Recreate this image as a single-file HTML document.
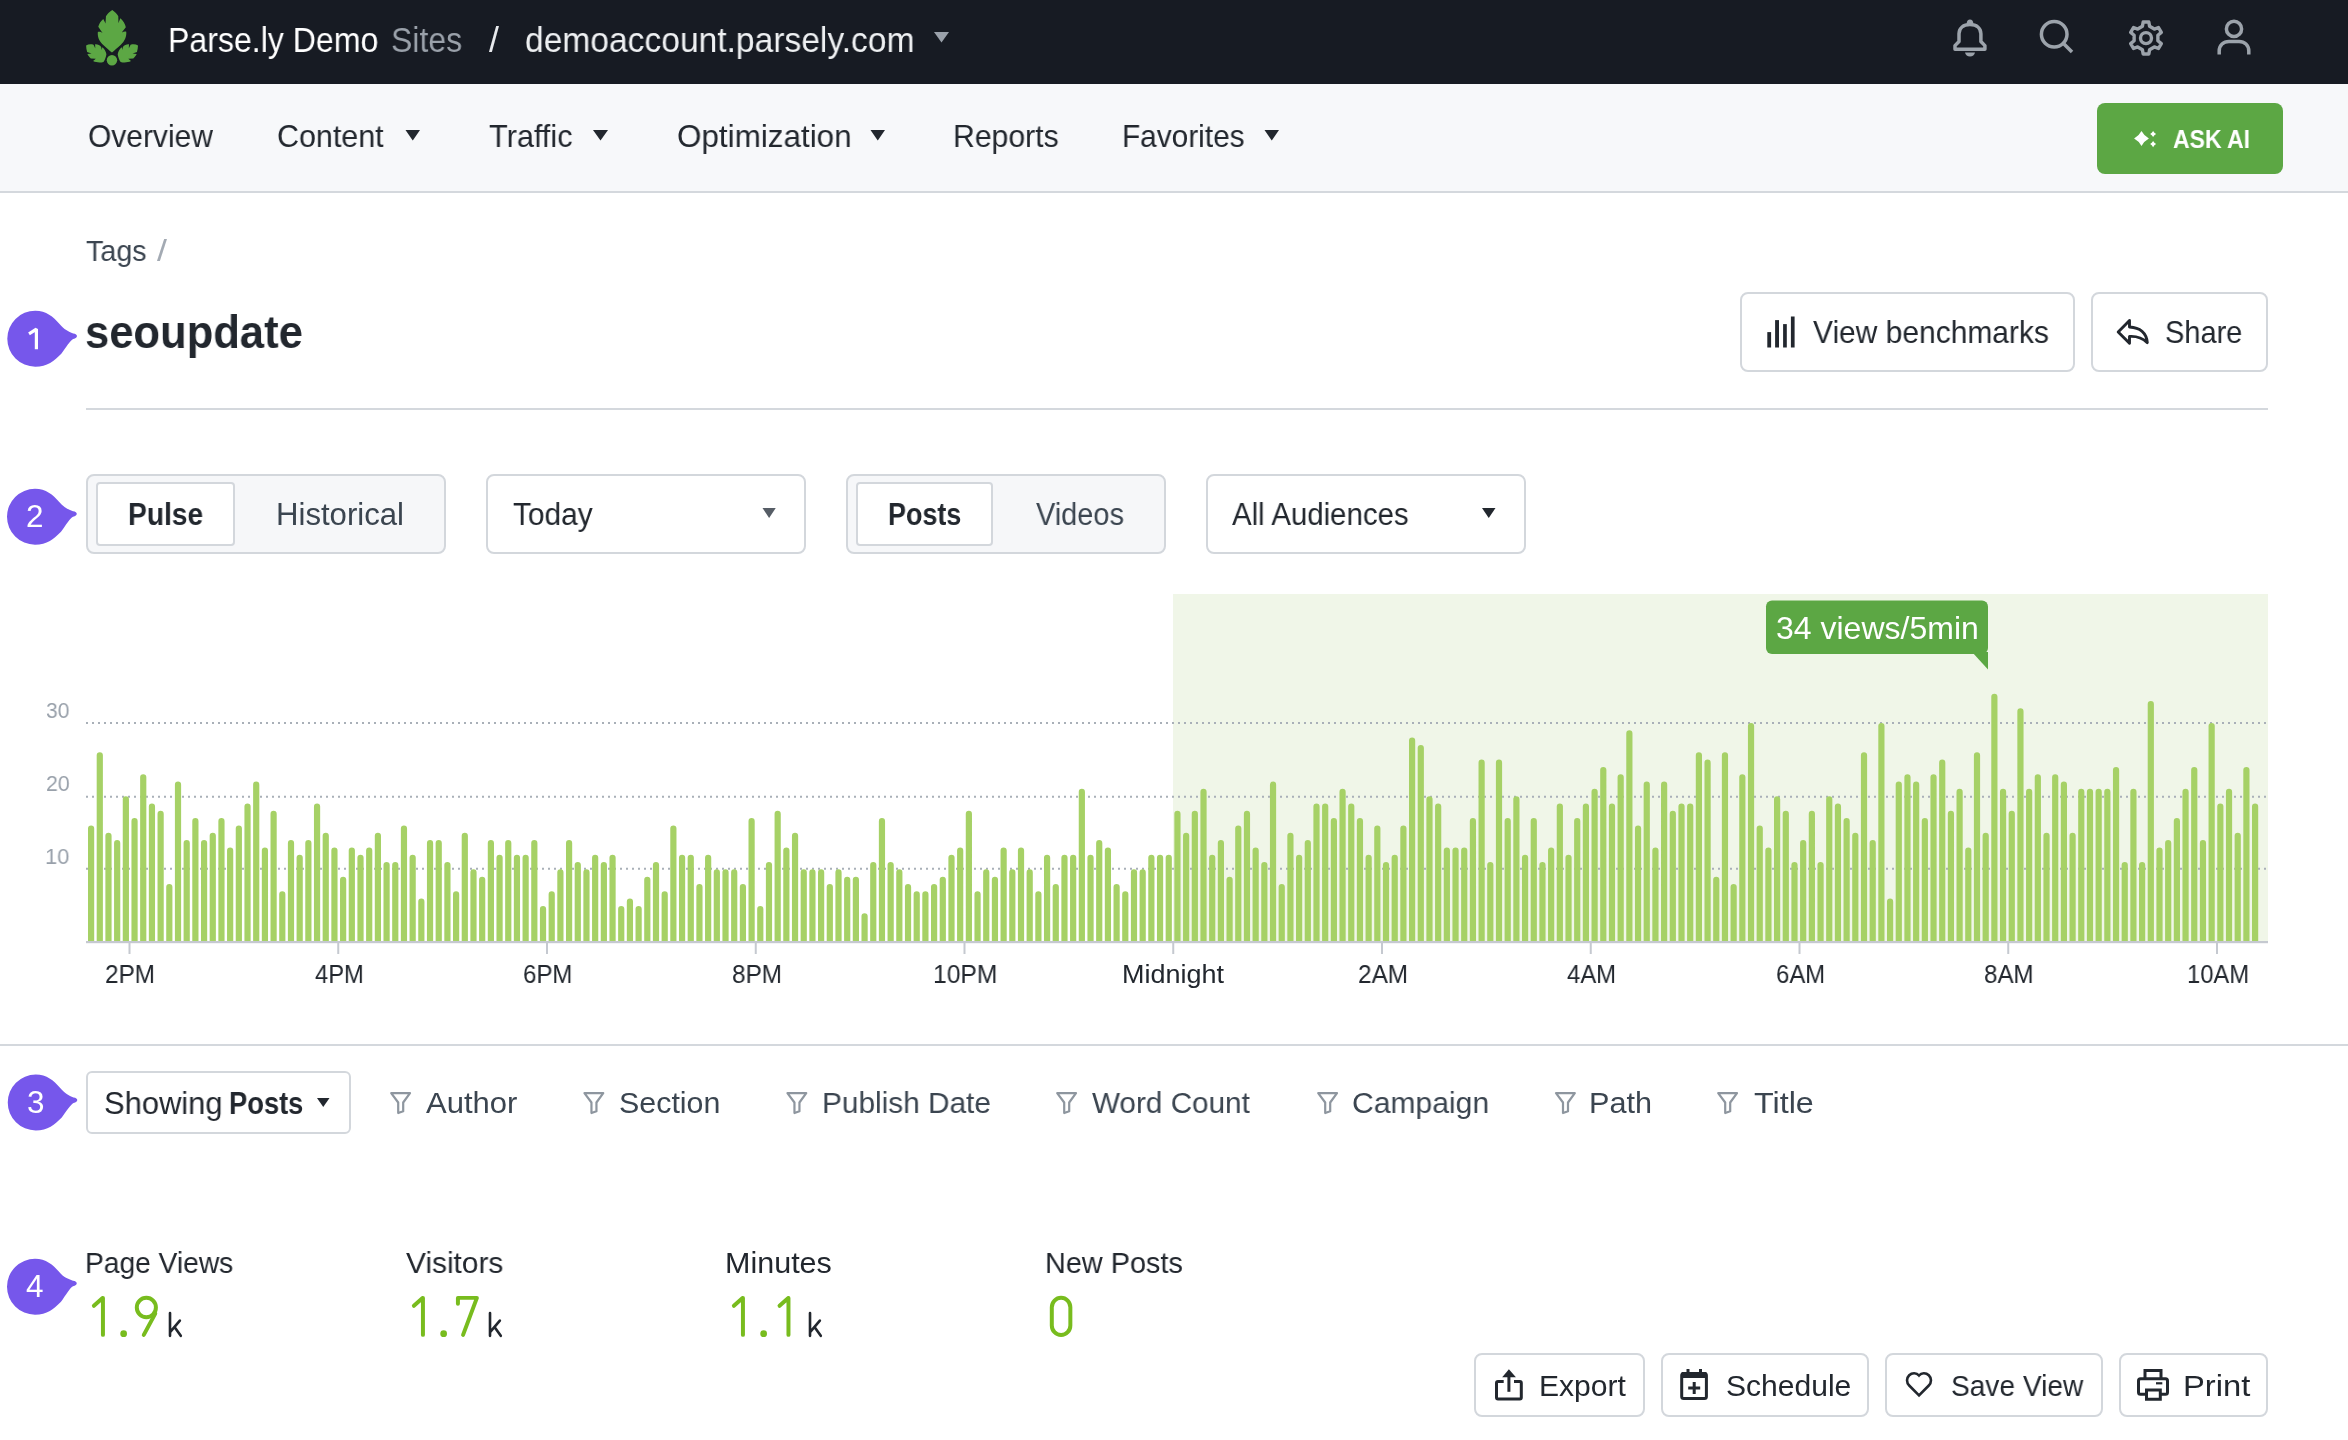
<!DOCTYPE html><html><head><meta charset="utf-8"><title>seoupdate - Parse.ly</title><style>*{margin:0;padding:0}
html,body{width:2348px;height:1440px;overflow:hidden;background:#ffffff}
body{position:relative;font-family:"Liberation Sans",sans-serif}
.b{position:absolute}
.t{position:absolute;white-space:nowrap;line-height:1;transform-origin:0 0;will-change:transform;font-family:"Liberation Sans",sans-serif}
svg{position:absolute;left:0;top:0}
</style></head><body><div class="b" style="left:0.00px;top:0.00px;width:2348.00px;height:84.00px;background:#171b23;"></div><div class="b" style="left:0.00px;top:84.00px;width:2348.00px;height:109.00px;background:#f7f8fa;"></div><div class="b" style="left:0.00px;top:191.00px;width:2348.00px;height:2.00px;background:#d4d8dd;"></div><div class="b" style="left:2097.00px;top:103.00px;width:186.00px;height:71.00px;background:#5ca744;border-radius:8px;"></div><div class="b" style="left:1740.00px;top:292.00px;width:335.00px;height:80.00px;background:#fff;box-sizing:border-box;border:2px solid #d3d7dc;border-radius:8px;"></div><div class="b" style="left:2091.00px;top:292.00px;width:177.00px;height:80.00px;background:#fff;box-sizing:border-box;border:2px solid #d3d7dc;border-radius:8px;"></div><div class="b" style="left:86.00px;top:408.00px;width:2182.00px;height:2.00px;background:#d4d8dd;"></div><div class="b" style="left:86.00px;top:474.00px;width:360.00px;height:80.00px;background:#f6f7f9;box-sizing:border-box;border:2px solid #d3d7dc;border-radius:8px;"></div><div class="b" style="left:96.00px;top:482.00px;width:139.00px;height:64.00px;background:#ffffff;box-sizing:border-box;border:2px solid #d3d7dc;border-radius:4px;"></div><div class="b" style="left:486.00px;top:474.00px;width:320.00px;height:80.00px;background:#ffffff;box-sizing:border-box;border:2px solid #d3d7dc;border-radius:8px;"></div><div class="b" style="left:846.00px;top:474.00px;width:320.00px;height:80.00px;background:#f6f7f9;box-sizing:border-box;border:2px solid #d3d7dc;border-radius:8px;"></div><div class="b" style="left:856.00px;top:482.00px;width:137.00px;height:64.00px;background:#ffffff;box-sizing:border-box;border:2px solid #d3d7dc;border-radius:4px;"></div><div class="b" style="left:1206.00px;top:474.00px;width:320.00px;height:80.00px;background:#ffffff;box-sizing:border-box;border:2px solid #d3d7dc;border-radius:8px;"></div><div class="b" style="left:1172.50px;top:594.00px;width:1095.50px;height:348.00px;background:#f0f6e8;"></div><div class="b" style="left:0.00px;top:1044.00px;width:2348.00px;height:2.00px;background:#d4d8dd;"></div><div class="b" style="left:86.00px;top:1071.00px;width:265.00px;height:63.00px;background:#ffffff;box-sizing:border-box;border:2px solid #d3d7dc;border-radius:6px;"></div><div class="b" style="left:1474.00px;top:1353.00px;width:171.00px;height:64.00px;background:#ffffff;box-sizing:border-box;border:2px solid #d3d7dc;border-radius:8px;"></div><div class="b" style="left:1661.00px;top:1353.00px;width:208.00px;height:64.00px;background:#ffffff;box-sizing:border-box;border:2px solid #d3d7dc;border-radius:8px;"></div><div class="b" style="left:1885.00px;top:1353.00px;width:218.00px;height:64.00px;background:#ffffff;box-sizing:border-box;border:2px solid #d3d7dc;border-radius:8px;"></div><div class="b" style="left:2119.00px;top:1353.00px;width:149.00px;height:64.00px;background:#ffffff;box-sizing:border-box;border:2px solid #d3d7dc;border-radius:8px;"></div><svg width="2348" height="1440" viewBox="0 0 2348 1440"><g transform="translate(80 5) scale(0.045139)" fill="#5ca744"><path d="M715 110C770 150 830 200 848 250L852 405C870 350 885 315 895 295C955 350 1005 430 1015 495L925 610C960 590 1000 585 1025 592C1035 700 990 800 905 880C830 950 760 1010 708 1050C650 1010 585 950 510 880C420 800 385 700 395 600C425 588 465 595 502 628L405 480C420 420 460 350 515 308C535 340 550 370 565 410L575 250C600 200 650 150 715 110Z"/><path d="M135 895C180 870 240 865 300 880L338 960L335 872C390 868 440 890 470 930L482 995L492 935C540 965 575 1030 585 1090C575 1160 550 1220 520 1260C450 1280 360 1275 290 1240L350 1190L240 1185C200 1150 175 1110 165 1085L255 1072L158 1040C145 990 135 940 135 895Z"/><path transform="translate(1420 0) scale(-1 1)" d="M135 895C180 870 240 865 300 880L338 960L335 872C390 868 440 890 470 930L482 995L492 935C540 965 575 1030 585 1090C575 1160 550 1220 520 1260C450 1280 360 1275 290 1240L350 1190L240 1185C200 1150 175 1110 165 1085L255 1072L158 1040C145 990 135 940 135 895Z"/><circle cx="708" cy="1225" r="115"/></g><path d="M934 32L949 32L941.5 42.5Z" fill="#9aa1aa"/><g fill="none" stroke="#9ca3ab" stroke-width="3.5" stroke-linejoin="round" stroke-linecap="round"><path d="M1959 41.5V33.8C1959 28 1963.5 24.5 1970 24.5C1976.5 24.5 1980.9 28 1980.9 33.8V41.5L1984.9 45.6V49.2H1955V45.6Z"/><circle cx="2054.2" cy="34.3" r="12.8"/><path d="M2063.5 43.5L2072 52" stroke-linecap="butt"/><circle cx="2234" cy="28.9" r="7.6"/><path d="M2219.2 54.5V51C2219.2 45 2223.5 41.5 2229 41.5H2239C2244.5 41.5 2248.8 45 2248.8 51V54.5" stroke-linecap="butt"/></g><path d="M1966.6 23.5Q1967 19.6 1970 19.6Q1973 19.6 1973.4 23.5Z" fill="#9ca3ab"/><path d="M1965 52.5H1975Q1974 56.5 1970 56.5Q1966 56.5 1965 52.5Z" fill="#9ca3ab"/><path d="M2142.43 26.33L2143.17 21.95L2148.83 21.95L2149.57 26.33L2154.32 29.08L2158.49 27.52L2161.32 32.43L2157.89 35.26L2157.89 40.74L2161.32 43.57L2158.49 48.48L2154.32 46.92L2149.57 49.67L2148.83 54.05L2143.17 54.05L2142.43 49.67L2137.68 46.92L2133.51 48.48L2130.68 43.57L2134.11 40.74L2134.11 35.26L2130.68 32.43L2133.51 27.52L2137.68 29.08Z" fill="none" stroke="#9ca3ab" stroke-width="3.4" stroke-linejoin="round"/><circle cx="2146" cy="38.1" r="5.5" fill="none" stroke="#9ca3ab" stroke-width="3.4"/><path d="M405.5 130L420 130L412.75 140.5Z" fill="#22272e"/><path d="M593 130L608 130L600.5 140.5Z" fill="#22272e"/><path d="M870.5 130L885 130L877.75 140.5Z" fill="#22272e"/><path d="M1264.5 130L1279 130L1271.75 140.5Z" fill="#22272e"/><g fill="#ffffff"><path d="M2141.5 131.0Q2144.1 135.9 2148.9 138.5Q2144.1 141.1 2141.5 146.0Q2138.9 141.1 2134.1 138.5Q2138.9 135.9 2141.5 131.0Z"/><path d="M2153.1 130.9Q2154.2 132.9 2156.1 134Q2154.2 135.1 2153.1 137.1Q2152.0 135.1 2150.1 134Q2152.0 132.9 2153.1 130.9Z"/><path d="M2153.1 141.0Q2154.2 143.0 2156.1 144.1Q2154.2 145.2 2153.1 147.2Q2152.0 145.2 2150.1 144.1Q2152.0 143.0 2153.1 141.0Z"/></g><g fill="#22272e"><rect x="1767.3" y="332.1" width="3.8" height="15.4"/><rect x="1775.1" y="320.1" width="3.9" height="27.4"/><rect x="1783.1" y="324.1" width="3.7" height="23.4"/><rect x="1790.9" y="316.5" width="3.7" height="31"/></g><path d="M2129.5 320.5L2118.2 332L2129.5 343.3V336.4C2136 336 2142 337.5 2147.3 342.6C2146.5 333 2140 327.5 2129.5 327Z" fill="none" stroke="#22272e" stroke-width="2.9" stroke-linejoin="round"/><path d="M762.5 508L775.75 508L769.125 518Z" fill="#565d66"/><path d="M1482 508L1495.5 508L1488.75 518Z" fill="#22272e"/><line x1="86" y1="723" x2="2268" y2="723" stroke="#a9b0b8" stroke-width="2" stroke-dasharray="2 4"/><line x1="86" y1="796.75" x2="2268" y2="796.75" stroke="#a9b0b8" stroke-width="2" stroke-dasharray="2 4"/><line x1="86" y1="868.75" x2="2268" y2="868.75" stroke="#a9b0b8" stroke-width="2" stroke-dasharray="2 4"/><path d="M88.00 942.5V828.53A3.1 3.1 0 0 1 94.20 828.53V942.5ZM96.69 942.5V755.36A3.1 3.1 0 0 1 102.89 755.36V942.5ZM105.38 942.5V835.85A3.1 3.1 0 0 1 111.58 835.85V942.5ZM114.07 942.5V843.16A3.1 3.1 0 0 1 120.27 843.16V942.5ZM122.76 942.5V799.26A3.1 3.1 0 0 1 128.96 799.26V942.5ZM131.45 942.5V821.21A3.1 3.1 0 0 1 137.65 821.21V942.5ZM140.14 942.5V777.31A3.1 3.1 0 0 1 146.34 777.31V942.5ZM148.84 942.5V806.58A3.1 3.1 0 0 1 155.04 806.58V942.5ZM157.53 942.5V813.89A3.1 3.1 0 0 1 163.73 813.89V942.5ZM166.22 942.5V887.06A3.1 3.1 0 0 1 172.42 887.06V942.5ZM174.91 942.5V784.63A3.1 3.1 0 0 1 181.11 784.63V942.5ZM183.60 942.5V843.16A3.1 3.1 0 0 1 189.80 843.16V942.5ZM192.29 942.5V821.21A3.1 3.1 0 0 1 198.49 821.21V942.5ZM200.98 942.5V843.16A3.1 3.1 0 0 1 207.18 843.16V942.5ZM209.67 942.5V835.85A3.1 3.1 0 0 1 215.87 835.85V942.5ZM218.36 942.5V821.21A3.1 3.1 0 0 1 224.56 821.21V942.5ZM227.05 942.5V850.48A3.1 3.1 0 0 1 233.25 850.48V942.5ZM235.74 942.5V828.53A3.1 3.1 0 0 1 241.94 828.53V942.5ZM244.43 942.5V806.58A3.1 3.1 0 0 1 250.63 806.58V942.5ZM253.12 942.5V784.63A3.1 3.1 0 0 1 259.32 784.63V942.5ZM261.82 942.5V850.48A3.1 3.1 0 0 1 268.02 850.48V942.5ZM270.51 942.5V813.89A3.1 3.1 0 0 1 276.71 813.89V942.5ZM279.20 942.5V894.38A3.1 3.1 0 0 1 285.40 894.38V942.5ZM287.89 942.5V843.16A3.1 3.1 0 0 1 294.09 843.16V942.5ZM296.58 942.5V857.80A3.1 3.1 0 0 1 302.78 857.80V942.5ZM305.27 942.5V843.16A3.1 3.1 0 0 1 311.47 843.16V942.5ZM313.96 942.5V806.58A3.1 3.1 0 0 1 320.16 806.58V942.5ZM322.65 942.5V835.85A3.1 3.1 0 0 1 328.85 835.85V942.5ZM331.34 942.5V850.48A3.1 3.1 0 0 1 337.54 850.48V942.5ZM340.03 942.5V879.75A3.1 3.1 0 0 1 346.23 879.75V942.5ZM348.72 942.5V850.48A3.1 3.1 0 0 1 354.92 850.48V942.5ZM357.41 942.5V857.80A3.1 3.1 0 0 1 363.61 857.80V942.5ZM366.10 942.5V850.48A3.1 3.1 0 0 1 372.30 850.48V942.5ZM374.80 942.5V835.85A3.1 3.1 0 0 1 381.00 835.85V942.5ZM383.49 942.5V865.11A3.1 3.1 0 0 1 389.69 865.11V942.5ZM392.18 942.5V865.11A3.1 3.1 0 0 1 398.38 865.11V942.5ZM400.87 942.5V828.53A3.1 3.1 0 0 1 407.07 828.53V942.5ZM409.56 942.5V857.80A3.1 3.1 0 0 1 415.76 857.80V942.5ZM418.25 942.5V901.70A3.1 3.1 0 0 1 424.45 901.70V942.5ZM426.94 942.5V843.16A3.1 3.1 0 0 1 433.14 843.16V942.5ZM435.63 942.5V843.16A3.1 3.1 0 0 1 441.83 843.16V942.5ZM444.32 942.5V865.11A3.1 3.1 0 0 1 450.52 865.11V942.5ZM453.01 942.5V894.38A3.1 3.1 0 0 1 459.21 894.38V942.5ZM461.70 942.5V835.85A3.1 3.1 0 0 1 467.90 835.85V942.5ZM470.39 942.5V872.43A3.1 3.1 0 0 1 476.59 872.43V942.5ZM479.08 942.5V879.75A3.1 3.1 0 0 1 485.28 879.75V942.5ZM487.78 942.5V843.16A3.1 3.1 0 0 1 493.98 843.16V942.5ZM496.47 942.5V857.80A3.1 3.1 0 0 1 502.67 857.80V942.5ZM505.16 942.5V843.16A3.1 3.1 0 0 1 511.36 843.16V942.5ZM513.85 942.5V857.80A3.1 3.1 0 0 1 520.05 857.80V942.5ZM522.54 942.5V857.80A3.1 3.1 0 0 1 528.74 857.80V942.5ZM531.23 942.5V843.16A3.1 3.1 0 0 1 537.43 843.16V942.5ZM539.92 942.5V909.01A3.1 3.1 0 0 1 546.12 909.01V942.5ZM548.61 942.5V894.38A3.1 3.1 0 0 1 554.81 894.38V942.5ZM557.30 942.5V872.43A3.1 3.1 0 0 1 563.50 872.43V942.5ZM565.99 942.5V843.16A3.1 3.1 0 0 1 572.19 843.16V942.5ZM574.68 942.5V865.11A3.1 3.1 0 0 1 580.88 865.11V942.5ZM583.37 942.5V872.43A3.1 3.1 0 0 1 589.57 872.43V942.5ZM592.06 942.5V857.80A3.1 3.1 0 0 1 598.26 857.80V942.5ZM600.76 942.5V865.11A3.1 3.1 0 0 1 606.96 865.11V942.5ZM609.45 942.5V857.80A3.1 3.1 0 0 1 615.65 857.80V942.5ZM618.14 942.5V909.01A3.1 3.1 0 0 1 624.34 909.01V942.5ZM626.83 942.5V901.70A3.1 3.1 0 0 1 633.03 901.70V942.5ZM635.52 942.5V909.01A3.1 3.1 0 0 1 641.72 909.01V942.5ZM644.21 942.5V879.75A3.1 3.1 0 0 1 650.41 879.75V942.5ZM652.90 942.5V865.11A3.1 3.1 0 0 1 659.10 865.11V942.5ZM661.59 942.5V894.38A3.1 3.1 0 0 1 667.79 894.38V942.5ZM670.28 942.5V828.53A3.1 3.1 0 0 1 676.48 828.53V942.5ZM678.97 942.5V857.80A3.1 3.1 0 0 1 685.17 857.80V942.5ZM687.66 942.5V857.80A3.1 3.1 0 0 1 693.86 857.80V942.5ZM696.35 942.5V887.06A3.1 3.1 0 0 1 702.55 887.06V942.5ZM705.04 942.5V857.80A3.1 3.1 0 0 1 711.24 857.80V942.5ZM713.73 942.5V872.43A3.1 3.1 0 0 1 719.93 872.43V942.5ZM722.43 942.5V872.43A3.1 3.1 0 0 1 728.63 872.43V942.5ZM731.12 942.5V872.43A3.1 3.1 0 0 1 737.32 872.43V942.5ZM739.81 942.5V887.06A3.1 3.1 0 0 1 746.01 887.06V942.5ZM748.50 942.5V821.21A3.1 3.1 0 0 1 754.70 821.21V942.5ZM757.19 942.5V909.01A3.1 3.1 0 0 1 763.39 909.01V942.5ZM765.88 942.5V865.11A3.1 3.1 0 0 1 772.08 865.11V942.5ZM774.57 942.5V813.89A3.1 3.1 0 0 1 780.77 813.89V942.5ZM783.26 942.5V850.48A3.1 3.1 0 0 1 789.46 850.48V942.5ZM791.95 942.5V835.85A3.1 3.1 0 0 1 798.15 835.85V942.5ZM800.64 942.5V872.43A3.1 3.1 0 0 1 806.84 872.43V942.5ZM809.33 942.5V872.43A3.1 3.1 0 0 1 815.53 872.43V942.5ZM818.02 942.5V872.43A3.1 3.1 0 0 1 824.22 872.43V942.5ZM826.71 942.5V887.06A3.1 3.1 0 0 1 832.91 887.06V942.5ZM835.41 942.5V872.43A3.1 3.1 0 0 1 841.61 872.43V942.5ZM844.10 942.5V879.75A3.1 3.1 0 0 1 850.30 879.75V942.5ZM852.79 942.5V879.75A3.1 3.1 0 0 1 858.99 879.75V942.5ZM861.48 942.5V916.33A3.1 3.1 0 0 1 867.68 916.33V942.5ZM870.17 942.5V865.11A3.1 3.1 0 0 1 876.37 865.11V942.5ZM878.86 942.5V821.21A3.1 3.1 0 0 1 885.06 821.21V942.5ZM887.55 942.5V865.11A3.1 3.1 0 0 1 893.75 865.11V942.5ZM896.24 942.5V872.43A3.1 3.1 0 0 1 902.44 872.43V942.5ZM904.93 942.5V887.06A3.1 3.1 0 0 1 911.13 887.06V942.5ZM913.62 942.5V894.38A3.1 3.1 0 0 1 919.82 894.38V942.5ZM922.31 942.5V894.38A3.1 3.1 0 0 1 928.51 894.38V942.5ZM931.00 942.5V887.06A3.1 3.1 0 0 1 937.20 887.06V942.5ZM939.69 942.5V879.75A3.1 3.1 0 0 1 945.89 879.75V942.5ZM948.39 942.5V857.80A3.1 3.1 0 0 1 954.59 857.80V942.5ZM957.08 942.5V850.48A3.1 3.1 0 0 1 963.28 850.48V942.5ZM965.77 942.5V813.89A3.1 3.1 0 0 1 971.97 813.89V942.5ZM974.46 942.5V894.38A3.1 3.1 0 0 1 980.66 894.38V942.5ZM983.15 942.5V872.43A3.1 3.1 0 0 1 989.35 872.43V942.5ZM991.84 942.5V879.75A3.1 3.1 0 0 1 998.04 879.75V942.5ZM1000.53 942.5V850.48A3.1 3.1 0 0 1 1006.73 850.48V942.5ZM1009.22 942.5V872.43A3.1 3.1 0 0 1 1015.42 872.43V942.5ZM1017.91 942.5V850.48A3.1 3.1 0 0 1 1024.11 850.48V942.5ZM1026.60 942.5V872.43A3.1 3.1 0 0 1 1032.80 872.43V942.5ZM1035.29 942.5V894.38A3.1 3.1 0 0 1 1041.49 894.38V942.5ZM1043.98 942.5V857.80A3.1 3.1 0 0 1 1050.18 857.80V942.5ZM1052.67 942.5V887.06A3.1 3.1 0 0 1 1058.87 887.06V942.5ZM1061.37 942.5V857.80A3.1 3.1 0 0 1 1067.57 857.80V942.5ZM1070.06 942.5V857.80A3.1 3.1 0 0 1 1076.26 857.80V942.5ZM1078.75 942.5V791.94A3.1 3.1 0 0 1 1084.95 791.94V942.5ZM1087.44 942.5V857.80A3.1 3.1 0 0 1 1093.64 857.80V942.5ZM1096.13 942.5V843.16A3.1 3.1 0 0 1 1102.33 843.16V942.5ZM1104.82 942.5V850.48A3.1 3.1 0 0 1 1111.02 850.48V942.5ZM1113.51 942.5V887.06A3.1 3.1 0 0 1 1119.71 887.06V942.5ZM1122.20 942.5V894.38A3.1 3.1 0 0 1 1128.40 894.38V942.5ZM1130.89 942.5V872.43A3.1 3.1 0 0 1 1137.09 872.43V942.5ZM1139.58 942.5V872.43A3.1 3.1 0 0 1 1145.78 872.43V942.5ZM1148.27 942.5V857.80A3.1 3.1 0 0 1 1154.47 857.80V942.5ZM1156.96 942.5V857.80A3.1 3.1 0 0 1 1163.16 857.80V942.5ZM1165.65 942.5V857.80A3.1 3.1 0 0 1 1171.85 857.80V942.5ZM1174.35 942.5V813.89A3.1 3.1 0 0 1 1180.55 813.89V942.5ZM1183.04 942.5V835.85A3.1 3.1 0 0 1 1189.24 835.85V942.5ZM1191.73 942.5V813.89A3.1 3.1 0 0 1 1197.93 813.89V942.5ZM1200.42 942.5V791.94A3.1 3.1 0 0 1 1206.62 791.94V942.5ZM1209.11 942.5V857.80A3.1 3.1 0 0 1 1215.31 857.80V942.5ZM1217.80 942.5V843.16A3.1 3.1 0 0 1 1224.00 843.16V942.5ZM1226.49 942.5V879.75A3.1 3.1 0 0 1 1232.69 879.75V942.5ZM1235.18 942.5V828.53A3.1 3.1 0 0 1 1241.38 828.53V942.5ZM1243.87 942.5V813.89A3.1 3.1 0 0 1 1250.07 813.89V942.5ZM1252.56 942.5V850.48A3.1 3.1 0 0 1 1258.76 850.48V942.5ZM1261.25 942.5V865.11A3.1 3.1 0 0 1 1267.45 865.11V942.5ZM1269.94 942.5V784.63A3.1 3.1 0 0 1 1276.14 784.63V942.5ZM1278.63 942.5V887.06A3.1 3.1 0 0 1 1284.83 887.06V942.5ZM1287.33 942.5V835.85A3.1 3.1 0 0 1 1293.53 835.85V942.5ZM1296.02 942.5V857.80A3.1 3.1 0 0 1 1302.22 857.80V942.5ZM1304.71 942.5V843.16A3.1 3.1 0 0 1 1310.91 843.16V942.5ZM1313.40 942.5V806.58A3.1 3.1 0 0 1 1319.60 806.58V942.5ZM1322.09 942.5V806.58A3.1 3.1 0 0 1 1328.29 806.58V942.5ZM1330.78 942.5V821.21A3.1 3.1 0 0 1 1336.98 821.21V942.5ZM1339.47 942.5V791.94A3.1 3.1 0 0 1 1345.67 791.94V942.5ZM1348.16 942.5V806.58A3.1 3.1 0 0 1 1354.36 806.58V942.5ZM1356.85 942.5V821.21A3.1 3.1 0 0 1 1363.05 821.21V942.5ZM1365.54 942.5V857.80A3.1 3.1 0 0 1 1371.74 857.80V942.5ZM1374.23 942.5V828.53A3.1 3.1 0 0 1 1380.43 828.53V942.5ZM1382.92 942.5V865.11A3.1 3.1 0 0 1 1389.12 865.11V942.5ZM1391.61 942.5V857.80A3.1 3.1 0 0 1 1397.81 857.80V942.5ZM1400.31 942.5V828.53A3.1 3.1 0 0 1 1406.51 828.53V942.5ZM1409.00 942.5V740.72A3.1 3.1 0 0 1 1415.20 740.72V942.5ZM1417.69 942.5V748.04A3.1 3.1 0 0 1 1423.89 748.04V942.5ZM1426.38 942.5V799.26A3.1 3.1 0 0 1 1432.58 799.26V942.5ZM1435.07 942.5V806.58A3.1 3.1 0 0 1 1441.27 806.58V942.5ZM1443.76 942.5V850.48A3.1 3.1 0 0 1 1449.96 850.48V942.5ZM1452.45 942.5V850.48A3.1 3.1 0 0 1 1458.65 850.48V942.5ZM1461.14 942.5V850.48A3.1 3.1 0 0 1 1467.34 850.48V942.5ZM1469.83 942.5V821.21A3.1 3.1 0 0 1 1476.03 821.21V942.5ZM1478.52 942.5V762.68A3.1 3.1 0 0 1 1484.72 762.68V942.5ZM1487.21 942.5V865.11A3.1 3.1 0 0 1 1493.41 865.11V942.5ZM1495.90 942.5V762.68A3.1 3.1 0 0 1 1502.10 762.68V942.5ZM1504.59 942.5V821.21A3.1 3.1 0 0 1 1510.79 821.21V942.5ZM1513.29 942.5V799.26A3.1 3.1 0 0 1 1519.49 799.26V942.5ZM1521.98 942.5V857.80A3.1 3.1 0 0 1 1528.18 857.80V942.5ZM1530.67 942.5V821.21A3.1 3.1 0 0 1 1536.87 821.21V942.5ZM1539.36 942.5V865.11A3.1 3.1 0 0 1 1545.56 865.11V942.5ZM1548.05 942.5V850.48A3.1 3.1 0 0 1 1554.25 850.48V942.5ZM1556.74 942.5V806.58A3.1 3.1 0 0 1 1562.94 806.58V942.5ZM1565.43 942.5V857.80A3.1 3.1 0 0 1 1571.63 857.80V942.5ZM1574.12 942.5V821.21A3.1 3.1 0 0 1 1580.32 821.21V942.5ZM1582.81 942.5V806.58A3.1 3.1 0 0 1 1589.01 806.58V942.5ZM1591.50 942.5V791.94A3.1 3.1 0 0 1 1597.70 791.94V942.5ZM1600.19 942.5V769.99A3.1 3.1 0 0 1 1606.39 769.99V942.5ZM1608.88 942.5V806.58A3.1 3.1 0 0 1 1615.08 806.58V942.5ZM1617.57 942.5V777.31A3.1 3.1 0 0 1 1623.77 777.31V942.5ZM1626.27 942.5V733.41A3.1 3.1 0 0 1 1632.47 733.41V942.5ZM1634.96 942.5V828.53A3.1 3.1 0 0 1 1641.16 828.53V942.5ZM1643.65 942.5V784.63A3.1 3.1 0 0 1 1649.85 784.63V942.5ZM1652.34 942.5V850.48A3.1 3.1 0 0 1 1658.54 850.48V942.5ZM1661.03 942.5V784.63A3.1 3.1 0 0 1 1667.23 784.63V942.5ZM1669.72 942.5V813.89A3.1 3.1 0 0 1 1675.92 813.89V942.5ZM1678.41 942.5V806.58A3.1 3.1 0 0 1 1684.61 806.58V942.5ZM1687.10 942.5V806.58A3.1 3.1 0 0 1 1693.30 806.58V942.5ZM1695.79 942.5V755.36A3.1 3.1 0 0 1 1701.99 755.36V942.5ZM1704.48 942.5V762.68A3.1 3.1 0 0 1 1710.68 762.68V942.5ZM1713.17 942.5V879.75A3.1 3.1 0 0 1 1719.37 879.75V942.5ZM1721.86 942.5V755.36A3.1 3.1 0 0 1 1728.06 755.36V942.5ZM1730.55 942.5V887.06A3.1 3.1 0 0 1 1736.75 887.06V942.5ZM1739.24 942.5V777.31A3.1 3.1 0 0 1 1745.44 777.31V942.5ZM1747.94 942.5V726.09A3.1 3.1 0 0 1 1754.14 726.09V942.5ZM1756.63 942.5V828.53A3.1 3.1 0 0 1 1762.83 828.53V942.5ZM1765.32 942.5V850.48A3.1 3.1 0 0 1 1771.52 850.48V942.5ZM1774.01 942.5V799.26A3.1 3.1 0 0 1 1780.21 799.26V942.5ZM1782.70 942.5V813.89A3.1 3.1 0 0 1 1788.90 813.89V942.5ZM1791.39 942.5V865.11A3.1 3.1 0 0 1 1797.59 865.11V942.5ZM1800.08 942.5V843.16A3.1 3.1 0 0 1 1806.28 843.16V942.5ZM1808.77 942.5V813.89A3.1 3.1 0 0 1 1814.97 813.89V942.5ZM1817.46 942.5V865.11A3.1 3.1 0 0 1 1823.66 865.11V942.5ZM1826.15 942.5V799.26A3.1 3.1 0 0 1 1832.35 799.26V942.5ZM1834.84 942.5V806.58A3.1 3.1 0 0 1 1841.04 806.58V942.5ZM1843.53 942.5V821.21A3.1 3.1 0 0 1 1849.73 821.21V942.5ZM1852.22 942.5V835.85A3.1 3.1 0 0 1 1858.42 835.85V942.5ZM1860.92 942.5V755.36A3.1 3.1 0 0 1 1867.12 755.36V942.5ZM1869.61 942.5V843.16A3.1 3.1 0 0 1 1875.81 843.16V942.5ZM1878.30 942.5V726.09A3.1 3.1 0 0 1 1884.50 726.09V942.5ZM1886.99 942.5V901.70A3.1 3.1 0 0 1 1893.19 901.70V942.5ZM1895.68 942.5V784.63A3.1 3.1 0 0 1 1901.88 784.63V942.5ZM1904.37 942.5V777.31A3.1 3.1 0 0 1 1910.57 777.31V942.5ZM1913.06 942.5V784.63A3.1 3.1 0 0 1 1919.26 784.63V942.5ZM1921.75 942.5V821.21A3.1 3.1 0 0 1 1927.95 821.21V942.5ZM1930.44 942.5V777.31A3.1 3.1 0 0 1 1936.64 777.31V942.5ZM1939.13 942.5V762.68A3.1 3.1 0 0 1 1945.33 762.68V942.5ZM1947.82 942.5V813.89A3.1 3.1 0 0 1 1954.02 813.89V942.5ZM1956.51 942.5V791.94A3.1 3.1 0 0 1 1962.71 791.94V942.5ZM1965.20 942.5V850.48A3.1 3.1 0 0 1 1971.40 850.48V942.5ZM1973.90 942.5V755.36A3.1 3.1 0 0 1 1980.10 755.36V942.5ZM1982.59 942.5V835.85A3.1 3.1 0 0 1 1988.79 835.85V942.5ZM1991.28 942.5V696.82A3.1 3.1 0 0 1 1997.48 696.82V942.5ZM1999.97 942.5V791.94A3.1 3.1 0 0 1 2006.17 791.94V942.5ZM2008.66 942.5V813.89A3.1 3.1 0 0 1 2014.86 813.89V942.5ZM2017.35 942.5V711.46A3.1 3.1 0 0 1 2023.55 711.46V942.5ZM2026.04 942.5V791.94A3.1 3.1 0 0 1 2032.24 791.94V942.5ZM2034.73 942.5V777.31A3.1 3.1 0 0 1 2040.93 777.31V942.5ZM2043.42 942.5V835.85A3.1 3.1 0 0 1 2049.62 835.85V942.5ZM2052.11 942.5V777.31A3.1 3.1 0 0 1 2058.31 777.31V942.5ZM2060.80 942.5V784.63A3.1 3.1 0 0 1 2067.00 784.63V942.5ZM2069.49 942.5V835.85A3.1 3.1 0 0 1 2075.69 835.85V942.5ZM2078.18 942.5V791.94A3.1 3.1 0 0 1 2084.38 791.94V942.5ZM2086.88 942.5V791.94A3.1 3.1 0 0 1 2093.08 791.94V942.5ZM2095.57 942.5V791.94A3.1 3.1 0 0 1 2101.77 791.94V942.5ZM2104.26 942.5V791.94A3.1 3.1 0 0 1 2110.46 791.94V942.5ZM2112.95 942.5V769.99A3.1 3.1 0 0 1 2119.15 769.99V942.5ZM2121.64 942.5V865.11A3.1 3.1 0 0 1 2127.84 865.11V942.5ZM2130.33 942.5V791.94A3.1 3.1 0 0 1 2136.53 791.94V942.5ZM2139.02 942.5V865.11A3.1 3.1 0 0 1 2145.22 865.11V942.5ZM2147.71 942.5V704.14A3.1 3.1 0 0 1 2153.91 704.14V942.5ZM2156.40 942.5V850.48A3.1 3.1 0 0 1 2162.60 850.48V942.5ZM2165.09 942.5V843.16A3.1 3.1 0 0 1 2171.29 843.16V942.5ZM2173.78 942.5V821.21A3.1 3.1 0 0 1 2179.98 821.21V942.5ZM2182.47 942.5V791.94A3.1 3.1 0 0 1 2188.67 791.94V942.5ZM2191.16 942.5V769.99A3.1 3.1 0 0 1 2197.36 769.99V942.5ZM2199.86 942.5V843.16A3.1 3.1 0 0 1 2206.06 843.16V942.5ZM2208.55 942.5V726.09A3.1 3.1 0 0 1 2214.75 726.09V942.5ZM2217.24 942.5V806.58A3.1 3.1 0 0 1 2223.44 806.58V942.5ZM2225.93 942.5V791.94A3.1 3.1 0 0 1 2232.13 791.94V942.5ZM2234.62 942.5V835.85A3.1 3.1 0 0 1 2240.82 835.85V942.5ZM2243.31 942.5V769.99A3.1 3.1 0 0 1 2249.51 769.99V942.5ZM2252.00 942.5V806.58A3.1 3.1 0 0 1 2258.20 806.58V942.5Z" fill="#a6d166"/><rect x="86" y="941" width="2182" height="2.2" fill="#c5c9d0"/><rect x="128.50" y="943" width="2" height="11" fill="#c5c9d0"/><rect x="337.25" y="943" width="2" height="11" fill="#c5c9d0"/><rect x="546.00" y="943" width="2" height="11" fill="#c5c9d0"/><rect x="754.75" y="943" width="2" height="11" fill="#c5c9d0"/><rect x="963.50" y="943" width="2" height="11" fill="#c5c9d0"/><rect x="1172.25" y="943" width="2" height="11" fill="#c5c9d0"/><rect x="1381.00" y="943" width="2" height="11" fill="#c5c9d0"/><rect x="1589.75" y="943" width="2" height="11" fill="#c5c9d0"/><rect x="1798.50" y="943" width="2" height="11" fill="#c5c9d0"/><rect x="2007.25" y="943" width="2" height="11" fill="#c5c9d0"/><rect x="2216.00" y="943" width="2" height="11" fill="#c5c9d0"/><rect x="1766" y="600.5" width="222" height="53.5" rx="6" fill="#5ca744"/><path d="M1972 652L1988 652L1988 669.5Z" fill="#5ca744"/><path d="M317 1098L329.5 1098L323.25 1107Z" fill="#22272e"/><path d="M391.2 1093.2H410L403.2 1102.5V1111.2L398.2 1113V1102.5Z" fill="none" stroke="#8e969f" stroke-width="2.2" stroke-linejoin="round"/><path d="M584.45 1093.2H603.25L596.45 1102.5V1111.2L591.45 1113V1102.5Z" fill="none" stroke="#8e969f" stroke-width="2.2" stroke-linejoin="round"/><path d="M787.45 1093.2H806.25L799.45 1102.5V1111.2L794.45 1113V1102.5Z" fill="none" stroke="#8e969f" stroke-width="2.2" stroke-linejoin="round"/><path d="M1057.2 1093.2H1076L1069.2 1102.5V1111.2L1064.2 1113V1102.5Z" fill="none" stroke="#8e969f" stroke-width="2.2" stroke-linejoin="round"/><path d="M1318.2 1093.2H1337L1330.2 1102.5V1111.2L1325.2 1113V1102.5Z" fill="none" stroke="#8e969f" stroke-width="2.2" stroke-linejoin="round"/><path d="M1556.0 1093.2H1574.8L1568.0 1102.5V1111.2L1563.0 1113V1102.5Z" fill="none" stroke="#8e969f" stroke-width="2.2" stroke-linejoin="round"/><path d="M1718.2 1093.2H1737L1730.2 1102.5V1111.2L1725.2 1113V1102.5Z" fill="none" stroke="#8e969f" stroke-width="2.2" stroke-linejoin="round"/><g transform="translate(85 1285) scale(0.046838)" fill="none" stroke="#78bc1e" stroke-width="85" stroke-linecap="round" stroke-linejoin="round"><path d="M190 445L370 282M383 275V1065"/><circle cx="825" cy="1040" r="72" fill="#78bc1e" stroke="none"/><ellipse cx="1310" cy="480" rx="204" ry="208"/><path d="M1500 610L1255 1065"/><path d="M1815 600V1085M2025 760L1830 990M1915 900L2045 1085" stroke="#22272e" stroke-width="56"/></g><g transform="translate(405 1285) scale(0.046838)" fill="none" stroke="#78bc1e" stroke-width="85" stroke-linecap="round" stroke-linejoin="round"><path d="M190 445L370 282M383 275V1065"/><circle cx="825" cy="1040" r="72" fill="#78bc1e" stroke="none"/><path d="M1130 400V275H1535L1240 1065"/><path d="M1815 600V1085M2025 760L1830 990M1915 900L2045 1085" stroke="#22272e" stroke-width="56"/></g><g transform="translate(725 1285) scale(0.046838)" fill="none" stroke="#78bc1e" stroke-width="85" stroke-linecap="round" stroke-linejoin="round"><path d="M190 445L370 282M383 275V1065"/><circle cx="825" cy="1040" r="72" fill="#78bc1e" stroke="none"/><path d="M1165 445L1345 282M1355 275V1065"/><path d="M1815 600V1085M2025 760L1830 990M1915 900L2045 1085" stroke="#22272e" stroke-width="56"/></g><g transform="translate(1040 1285) scale(0.046838)" fill="none" stroke="#78bc1e" stroke-width="85" stroke-linecap="round" stroke-linejoin="round"><rect x="252" y="272" width="396" height="796" rx="198" ry="205"/></g><path d="M35.3 310.7A28 28 0 1 0 35.3 366.7C47.3 366.7 54.3 360.7 61.3 353.7C66.3 346.7 70.3 340.4 73.2 338.9C78.2 337.9 78.2 333.9 73.2 333.4C68.3 331.4 64.3 329.7 59.3 323.7C53.3 316.7 46.3 310.7 35.3 310.7Z" fill="#7657eb"/><path d="M28.999999999999996 333.8L36.4 329.09999999999997V349.2" fill="none" stroke="#ffffff" stroke-width="3.2" stroke-linejoin="bevel"/><path d="M35 488.75A28 28 0 1 0 35 544.75C47 544.75 54 538.75 61 531.75C66 524.75 70 518.25 73 516.75C78 515.75 78 511.75 73 511.25C68 509.25 64 507.75 59 501.75C53 494.75 46 488.75 35 488.75Z" fill="#7657eb"/><path d="M35.75 1074.5A28 28 0 1 0 35.75 1130.5C47.75 1130.5 54.75 1124.5 61.75 1117.5C66.75 1110.5 70.75 1104.5 73.5 1103.0C78.5 1102.0 78.5 1098.0 73.5 1097.5C68.75 1095.5 64.75 1093.5 59.75 1087.5C53.75 1080.5 46.75 1074.5 35.75 1074.5Z" fill="#7657eb"/><path d="M35 1258.75A28 28 0 1 0 35 1314.75C47 1314.75 54 1308.75 61 1301.75C66 1294.75 70 1287.75 73 1286.25C78 1285.25 78 1281.25 73 1280.75C68 1278.75 64 1277.75 59 1271.75C53 1264.75 46 1258.75 35 1258.75Z" fill="#7657eb"/><g fill="none" stroke="#22272e" stroke-width="3"><path d="M1503.7 1381.6H1498Q1496.5 1381.6 1496.5 1383.1V1397.6Q1496.5 1399.1 1498 1399.1H1519.8Q1521.3 1399.1 1521.3 1397.6V1383.1Q1521.3 1381.6 1519.8 1381.6H1514"/><path d="M1508.9 1391.8V1376"/><rect x="1681.7" y="1373.5" width="24.7" height="25" rx="2"/><path d="M1688 1369V1373M1700.5 1369V1373M1688.2 1387.9H1700.2M1694.2 1381.9V1393.9"/><path d="M1919 1395.3L1909.2 1385.5C1906.3 1382.6 1906.3 1378 1909.2 1375.2C1912 1372.5 1916.5 1372.5 1919 1375.5C1921.5 1372.5 1926 1372.5 1928.8 1375.2C1931.7 1378 1931.7 1382.6 1928.8 1385.5Z" stroke-width="2.6" stroke-linejoin="miter"/><path d="M2145 1377.3V1370.5H2161V1377.3M2145 1394.3H2140.5Q2138.5 1394.3 2138.5 1392.3V1380.8Q2138.5 1378.8 2140.5 1378.8H2165.5Q2167.5 1378.8 2167.5 1380.8V1392.3Q2167.5 1394.3 2165.5 1394.3H2161M2146.5 1389.9H2160.3V1399.2H2146.5Z" stroke-width="3"/></g><path d="M1502.2 1377.2H1515.9L1508.9 1369.3Z" fill="#22272e"/><rect x="1681.7" y="1372" width="24.7" height="6" fill="#22272e"/><rect x="2156" y="1382.2" width="6.3" height="2.2" fill="#22272e"/></svg><div class="t" style="left:168.39px;top:21.82px;font-size:35.36px;font-weight:400;color:#ffffff;transform:scaleX(0.9072)">Parse.ly Demo</div><div class="t" style="left:391.03px;top:21.82px;font-size:35.36px;font-weight:400;color:#9aa1aa;transform:scaleX(0.9043)">Sites</div><div class="t" style="left:489.00px;top:21.82px;font-size:35.36px;font-weight:400;color:#e8eaed;transform:scaleX(1.0127)">/</div><div class="t" style="left:524.58px;top:21.82px;font-size:35.36px;font-weight:400;color:#eef0f2;transform:scaleX(0.9496)">demoaccount.parsely.com</div><div class="t" style="left:87.60px;top:120.43px;font-size:32.14px;font-weight:400;color:#22272e;transform:scaleX(0.9330)">Overview</div><div class="t" style="left:277.46px;top:120.43px;font-size:32.14px;font-weight:400;color:#22272e;transform:scaleX(0.9481)">Content</div><div class="t" style="left:489.28px;top:120.43px;font-size:32.14px;font-weight:400;color:#22272e;transform:scaleX(0.9549)">Traffic</div><div class="t" style="left:676.53px;top:120.43px;font-size:32.14px;font-weight:400;color:#22272e;transform:scaleX(0.9778)">Optimization</div><div class="t" style="left:953.04px;top:120.43px;font-size:32.14px;font-weight:400;color:#22272e;transform:scaleX(0.9390)">Reports</div><div class="t" style="left:1121.56px;top:120.43px;font-size:32.14px;font-weight:400;color:#22272e;transform:scaleX(0.9279)">Favorites</div><div class="t" style="left:2172.92px;top:126.50px;font-size:25.00px;font-weight:700;color:#ffffff;transform:scaleX(0.9202)">ASK AI</div><div class="t" style="left:86.40px;top:235.50px;font-size:30.00px;font-weight:400;color:#3b4550;transform:scaleX(0.9574)">Tags</div><div class="t" style="left:157.00px;top:235.50px;font-size:30.00px;font-weight:400;color:#a3aab3;transform:scaleX(1.1940)">/</div><div class="t" style="left:85.49px;top:308.00px;font-size:47.00px;font-weight:700;color:#22272e;transform:scaleX(0.9266)">seoupdate</div><div class="t" style="left:1813.38px;top:317.49px;font-size:31.43px;font-weight:400;color:#22272e;transform:scaleX(0.9533)">View benchmarks</div><div class="t" style="left:2165.13px;top:317.49px;font-size:31.43px;font-weight:400;color:#22272e;transform:scaleX(0.9222)">Share</div><div class="t" style="left:127.57px;top:498.96px;font-size:31.07px;font-weight:700;color:#22272e;transform:scaleX(0.9077)">Pulse</div><div class="t" style="left:276.24px;top:498.96px;font-size:31.07px;font-weight:400;color:#3b4550;transform:scaleX(1.0020)">Historical</div><div class="t" style="left:512.65px;top:498.96px;font-size:31.07px;font-weight:400;color:#22272e;transform:scaleX(0.9621)">Today</div><div class="t" style="left:888.16px;top:498.96px;font-size:31.07px;font-weight:700;color:#22272e;transform:scaleX(0.8664)">Posts</div><div class="t" style="left:1036.13px;top:498.96px;font-size:31.07px;font-weight:400;color:#3b4550;transform:scaleX(0.9317)">Videos</div><div class="t" style="left:1232.38px;top:498.96px;font-size:31.07px;font-weight:400;color:#22272e;transform:scaleX(0.9468)">All Audiences</div><div class="t" style="left:105.43px;top:961.54px;font-size:25.43px;font-weight:400;color:#22272e;transform:scaleX(0.9565)">2PM</div><div class="t" style="left:315.04px;top:961.54px;font-size:25.43px;font-weight:400;color:#22272e;transform:scaleX(0.9343)">4PM</div><div class="t" style="left:523.19px;top:961.54px;font-size:25.43px;font-weight:400;color:#22272e;transform:scaleX(0.9463)">6PM</div><div class="t" style="left:731.72px;top:961.54px;font-size:25.43px;font-weight:400;color:#22272e;transform:scaleX(0.9571)">8PM</div><div class="t" style="left:932.93px;top:961.54px;font-size:25.43px;font-weight:400;color:#22272e;transform:scaleX(0.9699)">10PM</div><div class="t" style="left:1121.79px;top:961.54px;font-size:25.43px;font-weight:400;color:#22272e;transform:scaleX(1.0617)">Midnight</div><div class="t" style="left:1357.90px;top:961.54px;font-size:25.43px;font-weight:400;color:#22272e;transform:scaleX(0.9575)">2AM</div><div class="t" style="left:1567.41px;top:961.54px;font-size:25.43px;font-weight:400;color:#22272e;transform:scaleX(0.9394)">4AM</div><div class="t" style="left:1775.82px;top:961.54px;font-size:25.43px;font-weight:400;color:#22272e;transform:scaleX(0.9412)">6AM</div><div class="t" style="left:1984.43px;top:961.54px;font-size:25.43px;font-weight:400;color:#22272e;transform:scaleX(0.9490)">8AM</div><div class="t" style="left:2186.60px;top:961.54px;font-size:25.43px;font-weight:400;color:#22272e;transform:scaleX(0.9347)">10AM</div><div class="t" style="left:46.18px;top:699.50px;font-size:22.50px;font-weight:400;color:#98a0aa;transform:scaleX(0.9355)">30</div><div class="t" style="left:45.94px;top:773.00px;font-size:22.50px;font-weight:400;color:#98a0aa;transform:scaleX(0.9457)">20</div><div class="t" style="left:45.30px;top:845.75px;font-size:22.50px;font-weight:400;color:#98a0aa;transform:scaleX(0.9721)">10</div><div class="t" style="left:1775.71px;top:613.13px;font-size:31.14px;font-weight:400;color:#ffffff;transform:scaleX(1.0285)">34 views/5min</div><div class="t" style="left:103.65px;top:1088.29px;font-size:31.43px;font-weight:400;color:#22272e;transform:scaleX(0.9840)">Showing</div><div class="t" style="left:229.40px;top:1088.29px;font-size:31.43px;font-weight:700;color:#22272e;transform:scaleX(0.8689)">Posts</div><div class="t" style="left:426.12px;top:1088.07px;font-size:30.36px;font-weight:400;color:#3b4550;transform:scaleX(1.0211)">Author</div><div class="t" style="left:619.37px;top:1088.07px;font-size:30.36px;font-weight:400;color:#3b4550;transform:scaleX(1.0013)">Section</div><div class="t" style="left:821.80px;top:1088.07px;font-size:30.36px;font-weight:400;color:#3b4550;transform:scaleX(0.9814)">Publish Date</div><div class="t" style="left:1092.48px;top:1088.07px;font-size:30.36px;font-weight:400;color:#3b4550;transform:scaleX(0.9780)">Word Count</div><div class="t" style="left:1352.21px;top:1088.07px;font-size:30.36px;font-weight:400;color:#3b4550;transform:scaleX(0.9913)">Campaign</div><div class="t" style="left:1588.98px;top:1088.07px;font-size:30.36px;font-weight:400;color:#3b4550;transform:scaleX(1.0086)">Path</div><div class="t" style="left:1754.14px;top:1088.07px;font-size:30.36px;font-weight:400;color:#3b4550;transform:scaleX(1.0636)">Title</div><div class="t" style="left:85.18px;top:1248.07px;font-size:30.36px;font-weight:400;color:#22272e;transform:scaleX(0.9280)">Page Views</div><div class="t" style="left:406.13px;top:1248.07px;font-size:30.36px;font-weight:400;color:#22272e;transform:scaleX(0.9834)">Visitors</div><div class="t" style="left:724.99px;top:1248.07px;font-size:30.36px;font-weight:400;color:#22272e;transform:scaleX(1.0049)">Minutes</div><div class="t" style="left:1045.13px;top:1248.07px;font-size:30.36px;font-weight:400;color:#22272e;transform:scaleX(0.9497)">New Posts</div><div class="t" style="left:25.75px;top:501.34px;font-size:31.43px;font-weight:400;color:#ffffff;transform:scaleX(1.0000)">2</div><div class="t" style="left:26.56px;top:1087.09px;font-size:31.43px;font-weight:400;color:#ffffff;transform:scaleX(1.0000)">3</div><div class="t" style="left:25.88px;top:1271.34px;font-size:31.43px;font-weight:400;color:#ffffff;transform:scaleX(1.0000)">4</div><div class="t" style="left:1539.46px;top:1370.61px;font-size:29.29px;font-weight:400;color:#22272e;transform:scaleX(1.0272)">Export</div><div class="t" style="left:1726.39px;top:1370.61px;font-size:29.29px;font-weight:400;color:#22272e;transform:scaleX(1.0262)">Schedule</div><div class="t" style="left:1951.48px;top:1370.61px;font-size:29.29px;font-weight:400;color:#22272e;transform:scaleX(0.9591)">Save View</div><div class="t" style="left:2182.74px;top:1370.61px;font-size:29.29px;font-weight:400;color:#22272e;transform:scaleX(1.1183)">Print</div></body></html>
